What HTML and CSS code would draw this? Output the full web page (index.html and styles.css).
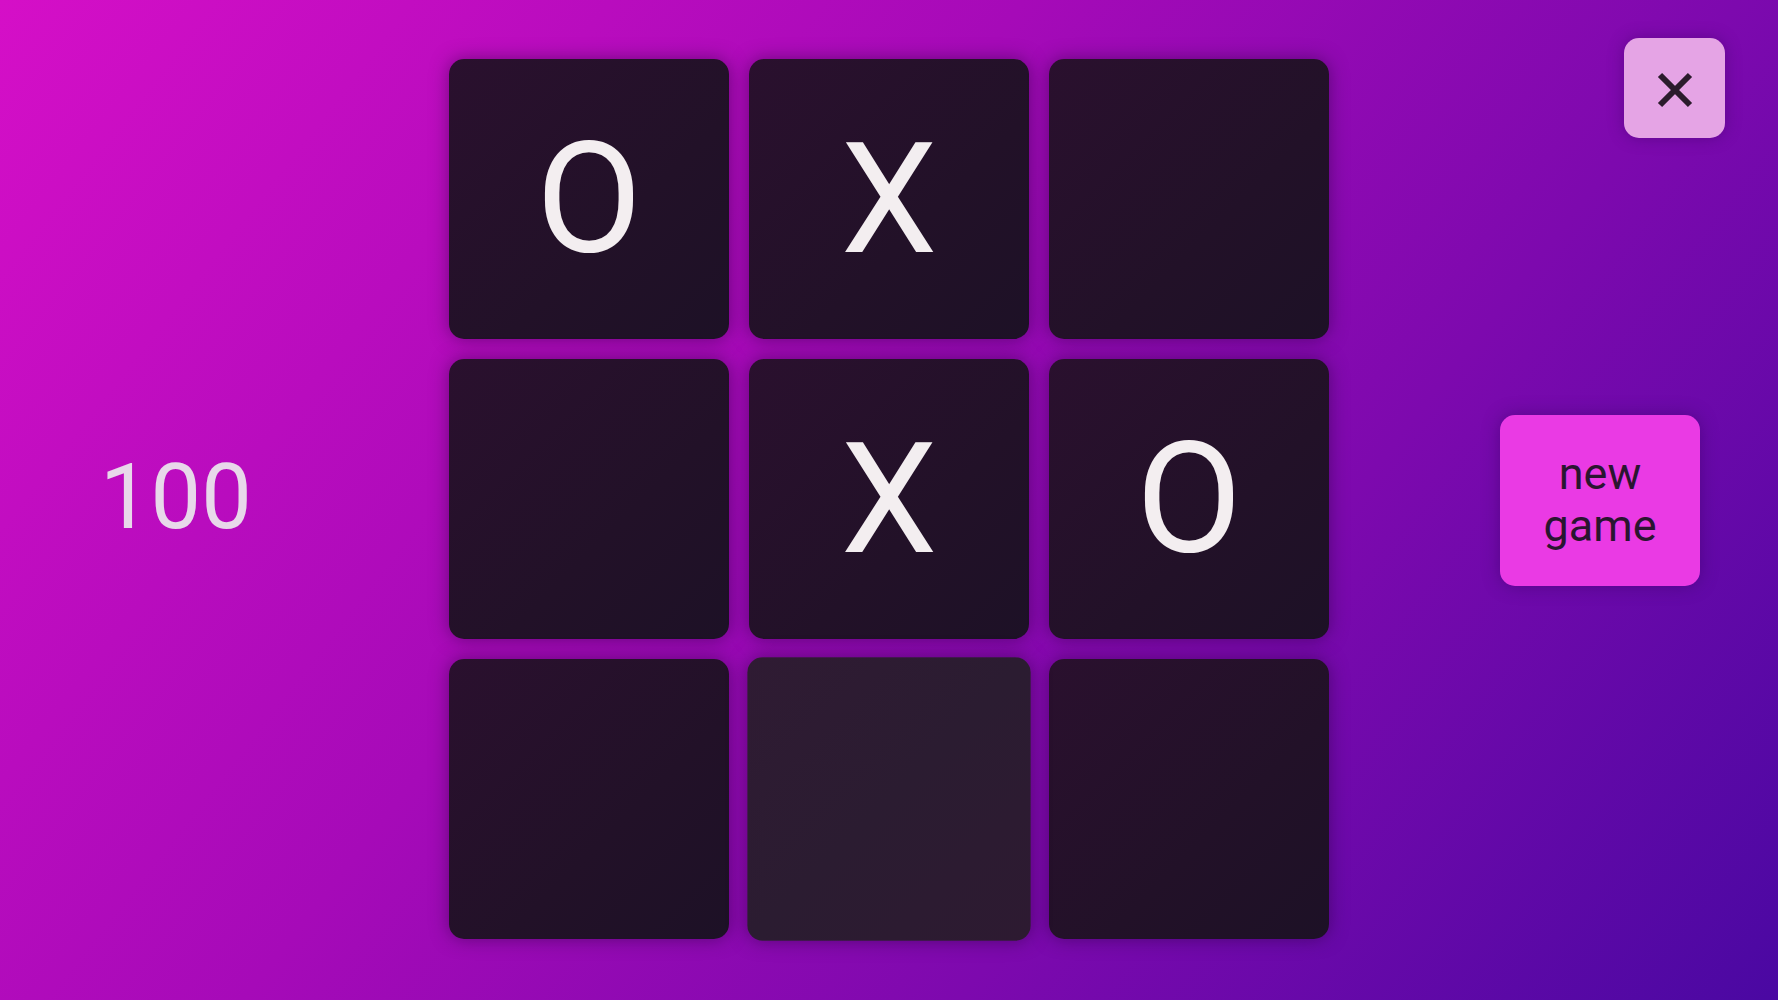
FILE: index.html
```html
<!DOCTYPE html>
<html lang="en">
<head>
<meta charset="utf-8">
<title>Tic Tac Toe</title>
<link rel="stylesheet" href="styles.css">
</head>
<body>
<main class="game">
  <div class="score">100</div>
  <div class="board">
    <div class="cell">O</div>
    <div class="cell">X</div>
    <div class="cell"></div>
    <div class="cell"></div>
    <div class="cell">X</div>
    <div class="cell">O</div>
    <div class="cell"></div>
    <div class="cell cell-hover"></div>
    <div class="cell"></div>
  </div>
  <div class="side">
    <button class="new-game">new game</button>
  </div>
</main>
<button class="close" aria-label="close">
  <svg width="36" height="36" viewBox="0 0 36 36" aria-hidden="true">
    <path d="M3 3 L33 33 M33 3 L3 33" stroke="#2b1b2c" stroke-width="6" stroke-linecap="butt" fill="none"/>
  </svg>
</button>
</body>
</html>
```
FILE: styles.css
```css
html, body {
  margin: 0;
  padding: 0;
  height: 100%;
}

body {
  background: linear-gradient(128deg, #d50fc7 0%, #a60ab8 40%, #7d09ae 68%, #4a08a2 100%);
  font-family: Roboto, "Liberation Sans", sans-serif;
  overflow: hidden;
}

.game {
  height: 100vh;
  display: grid;
  grid-template-columns: 1fr auto 1fr;
  align-items: center;
}

.score {
  justify-self: start;
  padding-left: 100px;
  font-size: 90px;
  line-height: 1;
  color: #e8d8ea;
  padding-bottom: 4px;
}

.board {
  display: grid;
  grid-template-columns: repeat(3, 280px);
  grid-template-rows: repeat(3, 280px);
  gap: 20px;
  margin-top: -3px;
}

.cell {
  border-radius: 15px;
  background: linear-gradient(135deg, #2a102e 0%, #221128 60%, #1d1126 100%);
  box-shadow: 0 0 18px rgba(40, 0, 60, 0.5);
  display: flex;
  align-items: center;
  justify-content: center;
  color: #f3eef0;
  font-size: 154px;
  line-height: 1;
  padding-top: 3px;
  box-sizing: border-box;
}

.cell-hover {
  background: linear-gradient(135deg, #2f1b33 0%, #2b1c31 50%, #2d1a31 100%);
  transform: scale(1.012);
}

.side {
  justify-self: end;
  padding-right: 78px;
}

.new-game {
  width: 200px;
  height: 171px;
  border: none;
  border-radius: 15px;
  background: #ea3ae4;
  color: #2a1530;
  font-family: Roboto, "Liberation Sans", sans-serif;
  font-size: 45px;
  line-height: 52px;
  padding: 0 30px;
  text-align: center;
  box-shadow: 0 0 18px rgba(50, 0, 90, 0.45);
  cursor: pointer;
}

.close {
  position: absolute;
  top: 38px;
  right: 53px;
  width: 101px;
  height: 100px;
  border: none;
  border-radius: 15px;
  background: #e5a4e5;
  box-shadow: 0 0 16px rgba(60, 0, 100, 0.45);
  display: flex;
  align-items: center;
  justify-content: center;
  padding: 0;
  cursor: pointer;
}

.close svg {
  display: block;
  margin-top: 4px;
}
```
